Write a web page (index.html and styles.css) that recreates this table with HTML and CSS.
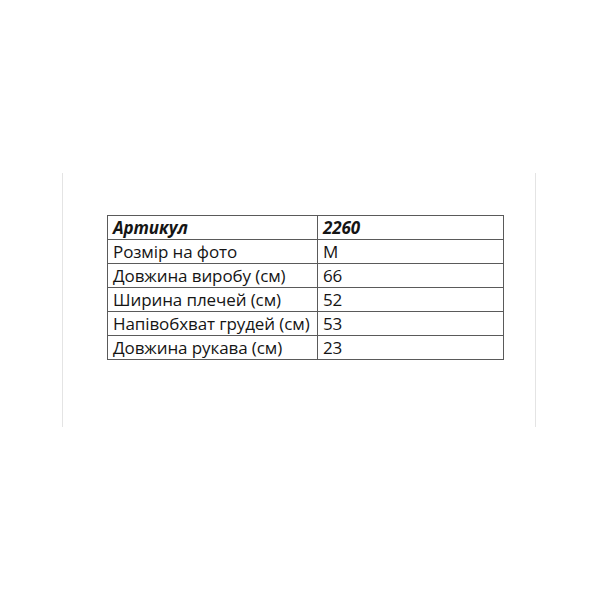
FILE: index.html
```html
<!DOCTYPE html>
<html>
<head>
<meta charset="utf-8">
<link rel="stylesheet" href="styles.css">
</head>
<body>
<div class="frame">
  <table class="specs">
    <tr class="head"><td class="c1">Артикул</td><td class="c2">2260</td></tr>
    <tr><td class="c1">Розмір на фото</td><td class="c2">M</td></tr>
    <tr><td class="c1">Довжина виробу (см)</td><td class="c2">66</td></tr>
    <tr><td class="c1">Ширина плечей (см)</td><td class="c2">52</td></tr>
    <tr><td class="c1">Напівобхват грудей (см)</td><td class="c2">53</td></tr>
    <tr><td class="c1">Довжина рукава (см)</td><td class="c2">23</td></tr>
  </table>
</div>
</body>
</html>
```
FILE: styles.css
```css
html, body {
  margin: 0;
  padding: 0;
  background: #fff;
}
.frame {
  margin: 173px 0 0 62px;
  width: 474px;
  height: 254px;
  border-left: 1px solid #e4e4e4;
  border-right: 1px solid #e4e4e4;
  padding: 42px 0 0 44px;
  box-sizing: border-box;
}
.specs {
  border-collapse: collapse;
  width: 397px;
  font-family: "Open Sans", "Noto Sans", sans-serif;
  font-size: 17px;
  letter-spacing: -0.1px;
  color: #151515;
}
.specs td {
  border: 1.5px solid #5a5a5a;
  height: 24px;
  padding: 0 0 0 5px;
  line-height: 22px;
  box-sizing: border-box;
  vertical-align: middle;
  white-space: nowrap;
}
.specs .c1 { width: 210px; }
.head td {
  font-weight: 700;
  font-style: italic;
}
```
